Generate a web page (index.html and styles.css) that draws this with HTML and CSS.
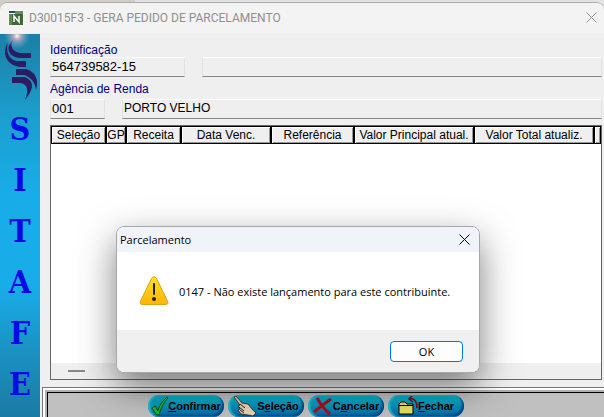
FILE: index.html
```
<!DOCTYPE html>
<html lang="pt-BR">
<head>
    <meta charset="UTF-8">
    <meta name="viewport" content="width=device-width, initial-scale=1.0">
    <title>D30015F3 - GERA PEDIDO DE PARCELAMENTO</title>
    <link rel="stylesheet" href="styles.css">
</head>
<body>
    <div class="window">
        <header class="titlebar">
            <svg class="app-icon" width="16" height="16" viewBox="0 0 16 16">
                <rect width="16" height="16" fill="#fff"/>
                <path d="M1 1h6v2H1z" fill="#2c4668"/>
                <path d="M7 1h8v4H7z" fill="#5b9a4c"/>
                <path d="M1 4h3v11H1z" fill="#5c8f50"/>
                <path d="M4 4h11v11H4z" fill="#3e6b35"/>
                <path d="M6 12V6l5 6V6" fill="none" stroke="#fff" stroke-width="1.500"/>
            </svg>
            <h1>D30015F3 - GERA PEDIDO DE PARCELAMENTO</h1>
            <button class="close" aria-label="Fechar janela">
                <svg width="11" height="11" viewBox="0 0 11 11"><path d="M.5.5l10 10M10.5.5l-10 10"/></svg>
            </button>
        </header>
        <div class="content">
            <aside class="sidebar">
                <svg class="logo" width="40" height="70" viewBox="0 0 40 70">
                    <defs>
                        <radialGradient id="glow">
                            <stop offset="0" stop-color="#fff"/>
                            <stop offset=".3" stop-color="#e8b8c8" stop-opacity=".7"/>
                            <stop offset="1" stop-color="#8ac" stop-opacity="0"/>
                        </radialGradient>
                    </defs>
                    <g fill="#2b1c63">
                        <path d="M16 4C9 8 10 17 20 19h11v5H20C6 23 5 10 16 4z"/>
                        <path d="M8 8C5 18 10 27 18 27h8v6h-6C7 31 1 20 8 8z"/>
                        <path d="M16 35h10c10 3 13 11 10 21-1-9-6-13-12-15h-8z"/>
                        <path d="M12 43h12c10 3 11 11 1 23 4-10 3-16-5-17h-8z"/>
                    </g>
                    <circle cx="17" cy="2" r="13" fill="url(#glow)"/>
                </svg>
                <span>S</span><span>I</span><span>T</span><span>A</span><span>F</span><span>E</span>
            </aside>
            <main class="main">
                <form class="fields">
                    <label for="ident">Identificação</label>
                    <div class="row">
                        <input id="ident" class="ident" value="564739582-15">
                        <input class="wide" aria-label="Nome">
                    </div>
                    <label for="agencia">Agência de Renda</label>
                    <div class="row">
                        <input id="agencia" class="code" value="001">
                        <input class="wide name" aria-label="Nome da agência" value="PORTO VELHO">
                    </div>
                </form>
                <div class="grid">
                    <table>
                        <colgroup>
                            <col class="c-sel"><col class="c-gp"><col class="c-rec"><col class="c-data">
                            <col class="c-ref"><col class="c-valor"><col class="c-valor"><col class="c-rest">
                        </colgroup>
                        <thead>
                            <tr>
                                <th>Seleção</th>
                                <th>GP</th>
                                <th>Receita</th>
                                <th>Data Venc.</th>
                                <th>Referência</th>
                                <th>Valor Principal atual.</th>
                                <th>Valor Total atualiz.</th>
                                <th></th>
                            </tr>
                        </thead>
                    </table>
                    <div class="scrollbar"><div class="thumb"></div></div>
                </div>
                <footer class="toolbar">
                    <button class="pill">
                        <svg width="17" height="20" viewBox="0 0 20 20" preserveAspectRatio="none"><path d="M1 12l4-2 3 5C10 9 14 4 19 1l1 1c-5 4-8 10-11 17H7z" fill="#0fc41c" stroke="#064b10"/></svg>
                        <span><u>C</u>onfirmar</span>
                    </button>
                    <button class="pill">
                        <svg width="24" height="20" viewBox="0 0 24 20"><path d="M1 1l2-1 6 7 6 1 4 5 4 4-3 3-5-1-7-1-3-4 2-1-2-3 2-1z" fill="#e6d3b3" stroke="#2a1c10" stroke-width=".8"/><path d="M7 8l5 4M6 11l5 4M7 14l4 3" stroke="#2a1c10"/></svg>
                        <span>S<u>e</u>leção</span>
                    </button>
                    <button class="pill">
                        <svg width="20" height="20" viewBox="0 0 20 20"><path d="M4 2c3 5 7 12 13 16M18 3C12 7 6 12 1 16" fill="none" stroke="#a80f1c" stroke-width="3"/></svg>
                        <span>C<u>a</u>ncelar</span>
                    </button>
                    <button class="pill">
                        <svg width="20" height="20" viewBox="0 0 20 20"><path d="M1 18V8l2-2h4l2 2h6v10z" fill="#e8e060" stroke="#000"/><path d="M1 9.500h14" stroke="#000"/><path d="M12 3c5-1 7 3 7 9M14 0l-3 3 4 3" fill="none" stroke="#7c0b14" stroke-width="1.500"/></svg>
                        <span><u>F</u>echar</span>
                    </button>
                </footer>
            </main>
        </div>
    </div>

    <div class="dialog" role="dialog" aria-labelledby="dialog-title">
        <div class="dialog-title">
            <h2 id="dialog-title">Parcelamento</h2>
            <button class="close" aria-label="Fechar">
                <svg width="11" height="11" viewBox="0 0 11 11"><path d="M.5.5l10 10M10.5.5l-10 10"/></svg>
            </button>
        </div>
        <div class="dialog-body">
            <svg width="30" height="30" viewBox="0 0 30 30">
                <defs>
                    <linearGradient id="warn" x2="0" y2="1">
                        <stop offset="0" stop-color="#ffe21a"/>
                        <stop offset="1" stop-color="#ffb40a"/>
                    </linearGradient>
                </defs>
                <path d="M12.500 2.500q2.500-3.500 5 0l11 22.500q1.500 3.500-2 3.500h-23q-3.500 0-2-3.500z" fill="url(#warn)" stroke="#e0a010"/>
                <path d="M15 8v10" stroke="#222" stroke-width="2" stroke-linecap="round"/>
                <circle cx="15" cy="23" r="2" fill="#222"/>
            </svg>
            <p>0147 - Não existe lançamento para este contribuinte.</p>
        </div>
        <div class="dialog-footer">
            <button class="ok">OK</button>
        </div>
    </div>
</body>
</html>
```
FILE: styles.css
```
* {
    box-sizing: border-box;
}
body {
    margin: 0;
    height: 100vh;
    padding-top: 2px;
    overflow: hidden;
    background: linear-gradient(to right, #d2cec6 135px, #e2e2e2 135px);
    font-family: "Liberation Sans", Arial, sans-serif;
    font-size: 12px;
    color: #000;
}
h1, h2, p {
    margin: 0;
    font-size: inherit;
    font-weight: normal;
}
button {
    padding: 0;
    border: 0;
    background: none;
    font: inherit;
    color: inherit;
}
.window {
    height: 100%;
    display: flex;
    flex-direction: column;
    border-top: 1px solid #adadad;
    border-radius: 8px 8px 0 0;
    background: #efefef;
    overflow: hidden;
}
.titlebar {
    display: flex;
    align-items: center;
    height: 30px;
    flex: none;
    padding: 0 7px 1px 8px;
    gap: 5px;
    background: #f3f3f3;
    color: #8f8f8f;
}
.titlebar h1 {
    flex: 1;
    font-family: Roboto, "Open Sans", sans-serif;
}
.close {
    display: flex;
}
.close svg {
    fill: none;
    stroke: currentColor;
}
.content {
    flex: 1;
    min-height: 0;
    display: flex;
    padding-top: 1px;
}
.sidebar {
    width: 40px;
    flex: none;
    display: flex;
    flex-direction: column;
    align-items: center;
    background: linear-gradient(#1b7fa6, #1b9fce 22%, #18ade9 42%, #18ade9 66%, #1a93c4 82%, #1a7ba3);
    color: #0a0ae6;
    font: bold 32px/51px "DejaVu Serif Condensed", "DejaVu Serif", serif;
}
.logo {
    flex: none;
}
.main {
    flex: 1;
    min-width: 0;
    display: flex;
    flex-direction: column;
}
.fields {
    padding: 9px 2px 6px 10px;
}
.fields label {
    display: block;
    height: 14px;
    line-height: 14px;
    color: #000080;
}
.row {
    display: flex;
    gap: 17px;
    height: 20px;
    margin-bottom: 5px;
}
.row + label {
    height: 17px;
}
.row:last-child {
    margin-bottom: 0;
}
.row input {
    height: 20px;
    min-width: 0;
    padding: 0 1px 2px;
    border: 1px solid #fff;
    border-right-color: #e2e2e2;
    border-left-color: #e2e2e2;
    border-bottom-color: #858585;
    background: #efefef;
    font: 13px "Liberation Sans", Arial, sans-serif;
}
.row .ident {
    width: 135px;
}
.row .code {
    width: 55px;
}
.row .wide {
    flex: 1;
}
.row .name {
    font-size: 12px;
}
.grid {
    flex: 1;
    margin: 0 2px 0 10px;
    display: flex;
    flex-direction: column;
    justify-content: space-between;
    overflow: hidden;
    border: 1px solid #666;
    background: #fff;
}
table {
    width: 100%;
    table-layout: fixed;
    border-collapse: separate;
    border-spacing: 0;
}
th {
    height: 18px;
    padding: 0;
    border: 1px solid #000;
    background: #efefef;
    box-shadow: inset 1px 1px #fff, inset -1px -1px #999;
    font-weight: normal;
    line-height: 16px;
    white-space: nowrap;
}
.c-sel, .c-rec {
    width: 55px;
}
.c-gp {
    width: 20px;
}
.c-data {
    width: 90px;
}
.c-ref {
    width: 83px;
}
.c-valor {
    width: 120px;
}
.scrollbar {
    height: 16px;
    padding: 7px 17px;
    background: #efefef;
}
.thumb {
    width: 17px;
    height: 2px;
    background: #888;
}
.toolbar {
    flex: none;
    display: flex;
    gap: 4px;
    height: 25px;
    margin: 12px 0 0 7px;
    padding: 2px 0 0 100px;
    border: solid #000;
    border-width: 1px 0 0 1px;
    background: #c0c0c0;
    box-shadow: 0 0 0 2px #b0b0b0, 0 0 0 4px #fff, 0 0 0 5px #777;
}
.pill {
    display: flex;
    align-items: center;
    justify-content: center;
    width: 76px;
    height: 22px;
    border-radius: 11px;
    background: linear-gradient(#08b4cc, #0898c0 45%, #0560a4);
    box-shadow: inset 2px 0 2px #2cc4dc, inset -2px -2px 2px #044a86;
    font-size: 11px;
    font-weight: bold;
}
.pill svg {
    flex: none;
}
.dialog {
    position: absolute;
    top: 226px;
    left: 116px;
    width: 364px;
    border: 1px solid #a8a8a8;
    border-radius: 8px;
    overflow: hidden;
    background: #fff;
    box-shadow: 0 14px 36px rgba(0, 0, 0, .5);
    font-family: "Open Sans", "Noto Sans", sans-serif;
    font-size: 11px;
}
.dialog-title {
    display: flex;
    align-items: center;
    justify-content: space-between;
    height: 25px;
    padding: 0 9px 0 3px;
    background: #f0f3f9;
}
.dialog-body {
    display: flex;
    align-items: center;
    gap: 10px;
    height: 78px;
    padding-left: 22px;
}
.dialog-footer {
    display: flex;
    justify-content: flex-end;
    padding: 11px 16px 10px;
    background: #f0f0f0;
}
.ok {
    width: 73px;
    height: 21px;
    border: 1px solid #0078d4;
    border-radius: 4px;
    background: #fdfdfd;
}
```
